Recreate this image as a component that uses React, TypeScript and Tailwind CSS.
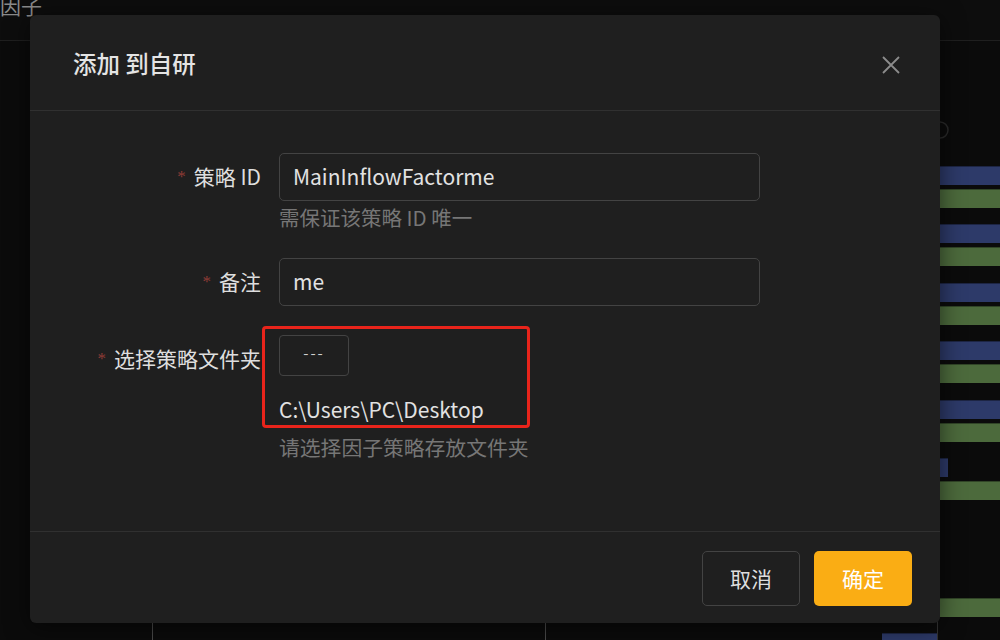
import React from "react";

const FONT = '"Noto Sans CJK SC", "Noto Sans", sans-serif';

function Chart() {
  const blue = "#2d3a69";
  const green = "#4c6a3c";
  const bars: { y: number; h: number; x: number; w: number; c: string }[] = [
    { y: 166, h: 19, x: 860, w: 140, c: blue },
    { y: 189, h: 19, x: 860, w: 140, c: green },
    { y: 224, h: 19, x: 860, w: 140, c: blue },
    { y: 247, h: 19, x: 860, w: 140, c: green },
    { y: 283, h: 19, x: 860, w: 140, c: blue },
    { y: 306, h: 19, x: 860, w: 140, c: green },
    { y: 341, h: 19, x: 860, w: 140, c: blue },
    { y: 364, h: 19, x: 860, w: 140, c: green },
    { y: 400, h: 19, x: 860, w: 140, c: blue },
    { y: 423, h: 19, x: 860, w: 140, c: green },
    { y: 458, h: 19, x: 860, w: 88, c: blue },
    { y: 481, h: 19, x: 860, w: 140, c: green },
    { y: 598, h: 19, x: 860, w: 140, c: green },
    { y: 633, h: 19, x: 882, w: 55, c: blue },
  ];
  return (
    <svg className="absolute left-0 top-0" width={1000} height={640}>
      {bars.map((b, i) => (
        <g key={i}>
          <rect x={b.x} y={b.y} width={b.w} height={b.h} fill={b.c} />
          <rect x={b.x} y={b.y} width={b.w} height={1} fill="#000" opacity={0.35} />
        </g>
      ))}
      <circle cx={940} cy={130} r={8} fill="none" stroke="#2a2a2a" strokeWidth={1.5} />
      <line x1={152.5} y1={600} x2={152.5} y2={640} stroke="#4a4a4a" strokeWidth={1} />
      <line x1={545.5} y1={600} x2={545.5} y2={640} stroke="#4a4a4a" strokeWidth={1} />
      <line x1={937.5} y1={600} x2={937.5} y2={640} stroke="#333" strokeWidth={1} />
    </svg>
  );
}

function Label({ text }: { text: string }) {
  return (
    <div className="flex h-[48px] items-center justify-end text-[21px] text-[#dedede]">
      <span className="mr-[8px] text-[17px] text-[#8e3b36]" style={{ fontFamily: '"Liberation Serif", serif' }}>
        *
      </span>
      <span>{text}</span>
    </div>
  );
}

export default function App() {
  return (
    <div
      className="relative h-[640px] w-[1000px] overflow-hidden bg-[#0b0b0b]"
      style={{ fontFamily: FONT }}
    >
      <div className="h-[41px] overflow-hidden border-b border-[#1f1f1f] bg-[#0d0d0d]">
        <span className="-mt-[10px] block text-[21px] leading-[30px] text-[#8a8a8a]">因子</span>
      </div>
      <Chart />

      <div className="absolute left-[30px] top-[15px] flex h-[608px] w-[910px] flex-col rounded-[6px] bg-[#1f1f1f] shadow-[0_4px_24px_rgba(0,0,0,0.55)]">
        <div className="flex h-[96px] items-center justify-between border-b border-[#303030] pl-[43px] pr-[40px] pt-[2px]">
          <span className="text-[23.5px] font-medium text-[#e4e4e4]">添加 到自研</span>
          <svg width="18" height="18" viewBox="0 0 18 18" className="mt-[3px]">
            <path d="M1 1 L17 17 M17 1 L1 17" stroke="#8c8c8c" strokeWidth="1.8" />
          </svg>
        </div>

        <div className="flex-1 pt-[42px]">
          <div className="grid grid-cols-[231px_481px] gap-x-[18px]">
            <Label text="策略 ID" />
            <div>
              <div className="flex h-[48px] items-center rounded-[5px] border border-[#434343] px-[13px] text-[21px] text-[#e2e2e2]">
                MainInflowFactorme
              </div>
              <div className="mt-[1px] text-[20.5px] leading-[30px] text-[#767676]">需保证该策略 ID 唯一</div>
            </div>

            <div className="mt-[26px]">
              <Label text="备注" />
            </div>
            <div className="mt-[26px]">
              <div className="flex h-[48px] items-center rounded-[5px] border border-[#434343] px-[13px] text-[21px] text-[#e2e2e2]">
                me
              </div>
            </div>

            <div className="mt-[29px]">
              <Label text="选择策略文件夹" />
            </div>
            <div className="relative mt-[29px]">
              <div className="flex h-[41px] w-[70px] items-center justify-center rounded-[4px] border border-[#434343] pb-[4px] text-[15px] tracking-[2px] text-[#cfcfcf]">
                ---
              </div>
              <div className="mt-[18px] text-[21px] leading-[30px] text-[#e2e2e2]">C:\Users\PC\Desktop</div>
              <div className="mt-[8px] text-[20.8px] leading-[30px] text-[#767676]">请选择因子策略存放文件夹</div>
              <div className="absolute -left-[17px] -top-[9px] h-[102px] w-[268px] rounded-[4px] border-[3px] border-[#e8241b]" />
            </div>
          </div>
        </div>

        <div className="flex h-[92px] items-start justify-end gap-[14px] border-t border-[#303030] pr-[28px] pt-[19px]">
          <button className="flex h-[55px] w-[98px] items-center justify-center rounded-[5px] border border-[#434343] text-[21px] text-[#dedede]">
            取消
          </button>
          <button className="flex h-[55px] w-[98px] items-center justify-center rounded-[5px] bg-[#faad14] text-[21px] text-white">
            确定
          </button>
        </div>
      </div>
    </div>
  );
}
